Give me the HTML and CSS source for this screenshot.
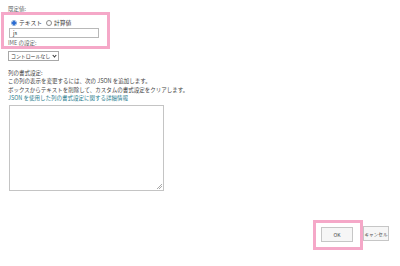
FILE: index.html
```html
<!DOCTYPE html>
<html lang="ja">
<head>
<meta charset="utf-8">
<link rel="stylesheet" href="styles.css">
</head>
<body>
<div class="page">
  <div class="label first">既定値:</div>
  <div class="radios">
    <span class="radio on"></span><span class="rlabel">テキスト</span>
    <span class="radio"></span><span class="rlabel">計算値</span>
  </div>
  <div class="input">js</div>
  <div class="label second">IME の設定:</div>
  <div class="select"><span>コントロールなし</span><span class="caret"></span></div>
  <div class="desc">
    <div>列の書式設定:</div>
    <div>この列の表示を変更するには、次の JSON を追加します。</div>
    <div>ボックスからテキストを削除して、カスタムの書式設定をクリアします。</div>
    <div class="link">JSON を使用した列の書式設定に関する詳細情報</div>
  </div>
  <div class="textarea"><span class="grip"></span></div>
  <div class="footer">
    <div class="btn ok">OK</div>
    <div class="btn cancel">キャンセル</div>
  </div>
  <div class="hl hl-top"></div>
  <div class="hl hl-ok"></div>
</div>
</body>
</html>
```
FILE: styles.css
```css
html, body {
  margin: 0;
  padding: 0;
  background: #ffffff;
}
.page {
  position: relative;
  width: 400px;
  height: 266px;
  box-sizing: border-box;
  padding: 0 0 0 8px;
  font-family: "Noto Sans CJK JP", "Noto Sans", sans-serif;
  font-size: 5.5px;
  color: #444444;
  overflow: hidden;
}
.label {
  height: 7px;
  line-height: 7px;
  color: #666666;
  white-space: nowrap;
}
.label.first {
  margin-top: 6px;
}
.radios {
  margin-top: 5px;
  height: 9px;
  display: flex;
  align-items: center;
  padding-left: 3px;
  white-space: nowrap;
}
.radio {
  width: 6px;
  height: 6px;
  box-sizing: border-box;
  border: 1px solid #8a8a8a;
  border-radius: 50%;
  background: #fff;
}
.radio.on {
  border-color: #7aa3d6;
  background: radial-gradient(circle, #2a6bd4 0 1.7px, #ffffff 2px);
}
.rlabel {
  margin: 0 4px 0 2px;
  line-height: 9px;
  font-size: 5.8px;
  color: #333;
}
.input {
  margin: 1px 0 0 1px;
  width: 90px;
  height: 10px;
  box-sizing: border-box;
  border: 1px solid #b8b8b8;
  padding-left: 3px;
  line-height: 8px;
  font-size: 5.5px;
  color: #333;
}
.label.second {
  margin-top: 2px;
}
.select {
  margin-top: 4px;
  width: 51px;
  height: 10px;
  box-sizing: border-box;
  border: 1px solid #a8a8a8;
  display: flex;
  align-items: center;
  justify-content: space-between;
  padding: 0 2px 0 2px;
  font-size: 4.9px;
  line-height: 8px;
  color: #333;
  white-space: nowrap;
}
.caret {
  flex: none;
  width: 2px;
  height: 2px;
  border-right: 1px solid #333;
  border-bottom: 1px solid #333;
  transform: rotate(45deg);
  margin-bottom: 2px;
}
.desc {
  margin-top: 8px;
  line-height: 8.3px;
  font-size: 5.5px;
  color: #444;
  white-space: nowrap;
}
.link {
  color: #2a7d8e;
}
.textarea {
  position: relative;
  margin: 3px 0 0 1px;
  width: 155px;
  height: 86px;
  box-sizing: border-box;
  border: 1px solid #c4c4c4;
}
.grip {
  position: absolute;
  right: 1px;
  bottom: 1px;
  width: 5px;
  height: 5px;
  background: linear-gradient(135deg, transparent 0 45%, #aaa 45% 55%, transparent 55% 70%, #aaa 70% 80%, transparent 80%);
}
.footer {
  margin-top: 36px;
  display: flex;
  justify-content: flex-end;
  gap: 10px;
  padding-right: 11px;
}
.btn {
  height: 15px;
  box-sizing: border-box;
  border: 1px solid #c6c6c6;
  background: #f6f6f6;
  display: flex;
  align-items: center;
  justify-content: center;
  font-size: 5px;
  color: #444;
  white-space: nowrap;
}
.btn.ok {
  width: 32px;
}
.btn.cancel {
  width: 26px;
  font-size: 4.6px;
  margin-top: -1px;
}
.hl {
  position: absolute;
  border: 3px solid #f5a8c8;
  box-sizing: border-box;
}
.hl-top {
  left: 1px;
  top: 12px;
  width: 109px;
  height: 37px;
}
.hl-ok {
  left: 313px;
  top: 220px;
  width: 50px;
  height: 30px;
}
```
